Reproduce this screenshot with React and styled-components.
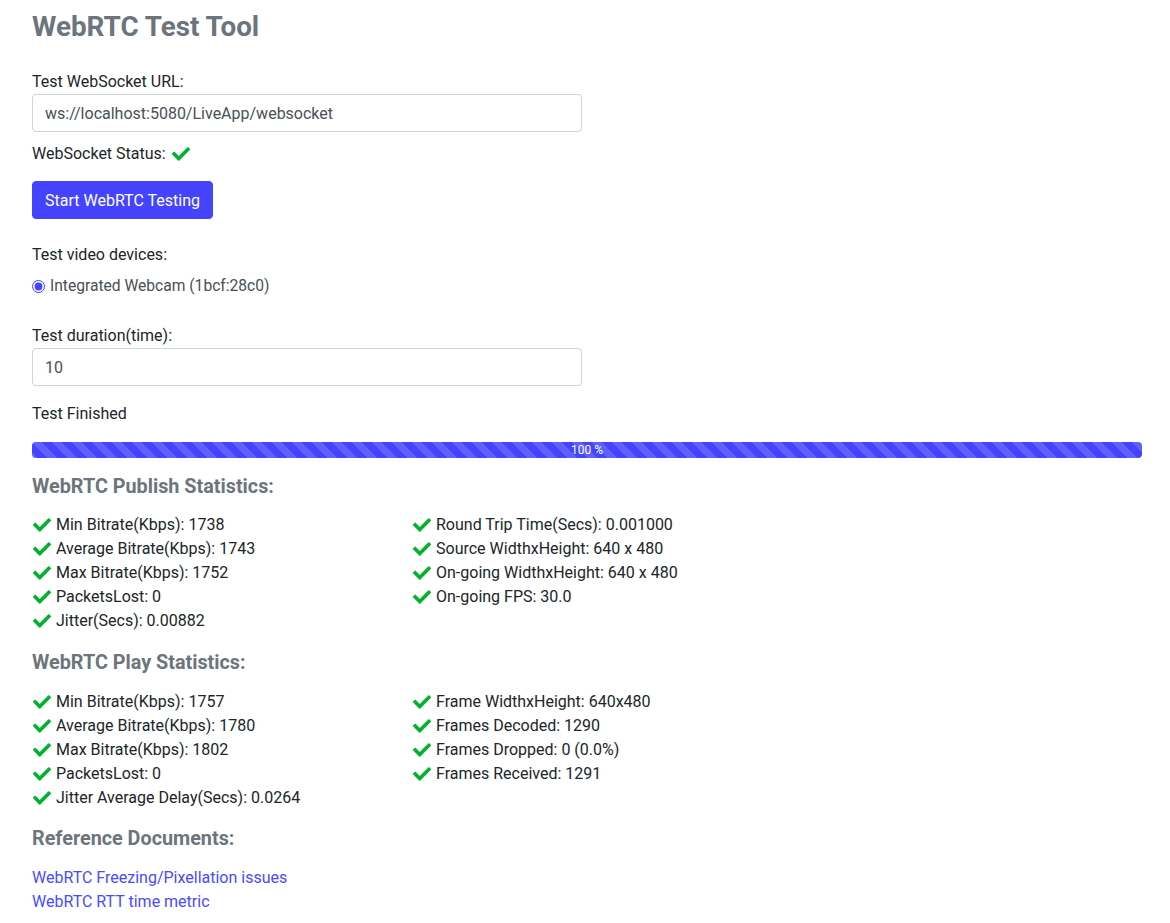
import styled, { createGlobalStyle } from 'styled-components'
import { FaCheck } from 'react-icons/fa'

const Global = createGlobalStyle`
  body {
    margin: 0;
    font-family: Roboto, "Liberation Sans", sans-serif;
    font-size: 16px;
    line-height: 24px;
    color: #212529;
    background: #fff;
  }
`

const Page = styled.div`
  padding: 10px 28px 20px 32px;
`

const Title = styled.h1`
  margin: 0 0 26px;
  font-size: 27.8px;
  line-height: 34px;
  font-weight: 700;
  color: #6c757d;
`

const Label = styled.div`
  margin-top: ${(p) => p.top || 0}px;
  display: flex;
  align-items: center;
  gap: 5px;
`

const TextInput = styled.input`
  display: block;
  box-sizing: border-box;
  width: 550px;
  height: 38px;
  margin-top: 0;
  padding: 6px 12px;
  font-family: inherit;
  font-size: 16px;
  color: #495057;
  border: 1px solid #ced4da;
  border-radius: 4px;
  outline: none;
`

const Button = styled.button`
  display: block;
  margin-top: 15px;
  height: 38px;
  padding: 6px 12px;
  font-family: inherit;
  font-size: 16px;
  color: #fff;
  background: #4444ff;
  border: 1px solid #4444ff;
  border-radius: 4px;
`

const RadioRow = styled.label`
  margin-top: 7px;
  display: flex;
  align-items: center;
  gap: 5px;
  font-size: 15.6px;
  color: #495057;

  input {
    margin: 0;
    width: 13px;
    height: 13px;
    accent-color: #4444ff;
  }
`

const Progress = styled.div`
  margin-top: 16px;
  height: 16px;
  border-radius: 4px;
  overflow: hidden;
  background: #e9ecef;
  display: flex;
`

const Bar = styled.div`
  display: flex;
  align-items: center;
  justify-content: center;
  font-size: 12px;
  line-height: 16px;
  color: #fff;
  background-color: #4444ff;
  background-image: linear-gradient(
    45deg,
    rgba(255, 255, 255, 0.15) 25%,
    transparent 25%,
    transparent 50%,
    rgba(255, 255, 255, 0.15) 50%,
    rgba(255, 255, 255, 0.15) 75%,
    transparent 75%,
    transparent
  );
  background-size: 20px 20px;
`

const Heading = styled.h3`
  margin: ${(p) => p.top}px 0 ${(p) => p.bottom || 15}px;
  font-size: 19.8px;
  line-height: 24px;
  font-weight: 700;
  color: #6c757d;
`

const StatGrid = styled.div`
  display: grid;
  grid-template-columns: 380px 380px;
  grid-auto-flow: column;
  grid-template-rows: repeat(5, 24px);
`

const Stat = styled.div`
  display: flex;
  align-items: center;
  gap: 5px;
  white-space: nowrap;
`

const Check = styled(FaCheck)`
  color: #00b22d;
  font-size: 18px;
  flex-shrink: 0;
  margin-left: 1px;
`

const Links = styled.div`
  display: flex;
  flex-direction: column;

  a {
    color: #4a4aff;
    text-decoration: none;
  }
`

const publish = [
  'Min Bitrate(Kbps): 1738',
  'Average Bitrate(Kbps): 1743',
  'Max Bitrate(Kbps): 1752',
  'PacketsLost: 0',
  'Jitter(Secs): 0.00882',
  'Round Trip Time(Secs): 0.001000',
  'Source WidthxHeight: 640 x 480',
  'On-going WidthxHeight: 640 x 480',
  'On-going FPS: 30.0',
]

const play = [
  'Min Bitrate(Kbps): 1757',
  'Average Bitrate(Kbps): 1780',
  'Max Bitrate(Kbps): 1802',
  'PacketsLost: 0',
  'Jitter Average Delay(Secs): 0.0264',
  'Frame WidthxHeight: 640x480',
  'Frames Decoded: 1290',
  'Frames Dropped: 0 (0.0%)',
  'Frames Received: 1291',
]

function Stats({ items }) {
  return (
    <StatGrid>
      {items.map((s) => (
        <Stat key={s}>
          <Check />
          {s}
        </Stat>
      ))}
    </StatGrid>
  )
}

export default function App() {
  return (
    <Page>
      <Global />
      <Title>WebRTC Test Tool</Title>
      <Label>Test WebSocket URL:</Label>
      <TextInput defaultValue="ws://localhost:5080/LiveApp/websocket" />
      <Label top={10}>
        WebSocket Status: <Check />
      </Label>
      <Button>Start WebRTC Testing</Button>
      <Label top={24}>Test video devices:</Label>
      <RadioRow>
        <input type="radio" defaultChecked name="cam" />
        Integrated Webcam (1bcf:28c0)
      </RadioRow>
      <Label top={26}>Test duration(time):</Label>
      <TextInput defaultValue="10" />
      <Label top={16}>Test Finished</Label>
      <Progress>
        <Bar style={{ width: '100%' }}>100 %</Bar>
      </Progress>
      <Heading top={17} bottom={14}>WebRTC Publish Statistics:</Heading>
      <Stats items={publish} />
      <Heading top={18}>WebRTC Play Statistics:</Heading>
      <Stats items={play} />
      <Heading top={17}>Reference Documents:</Heading>
      <Links>
        <a href="#">WebRTC Freezing/Pixellation issues</a>
        <a href="#">WebRTC RTT time metric</a>
      </Links>
    </Page>
  )
}
